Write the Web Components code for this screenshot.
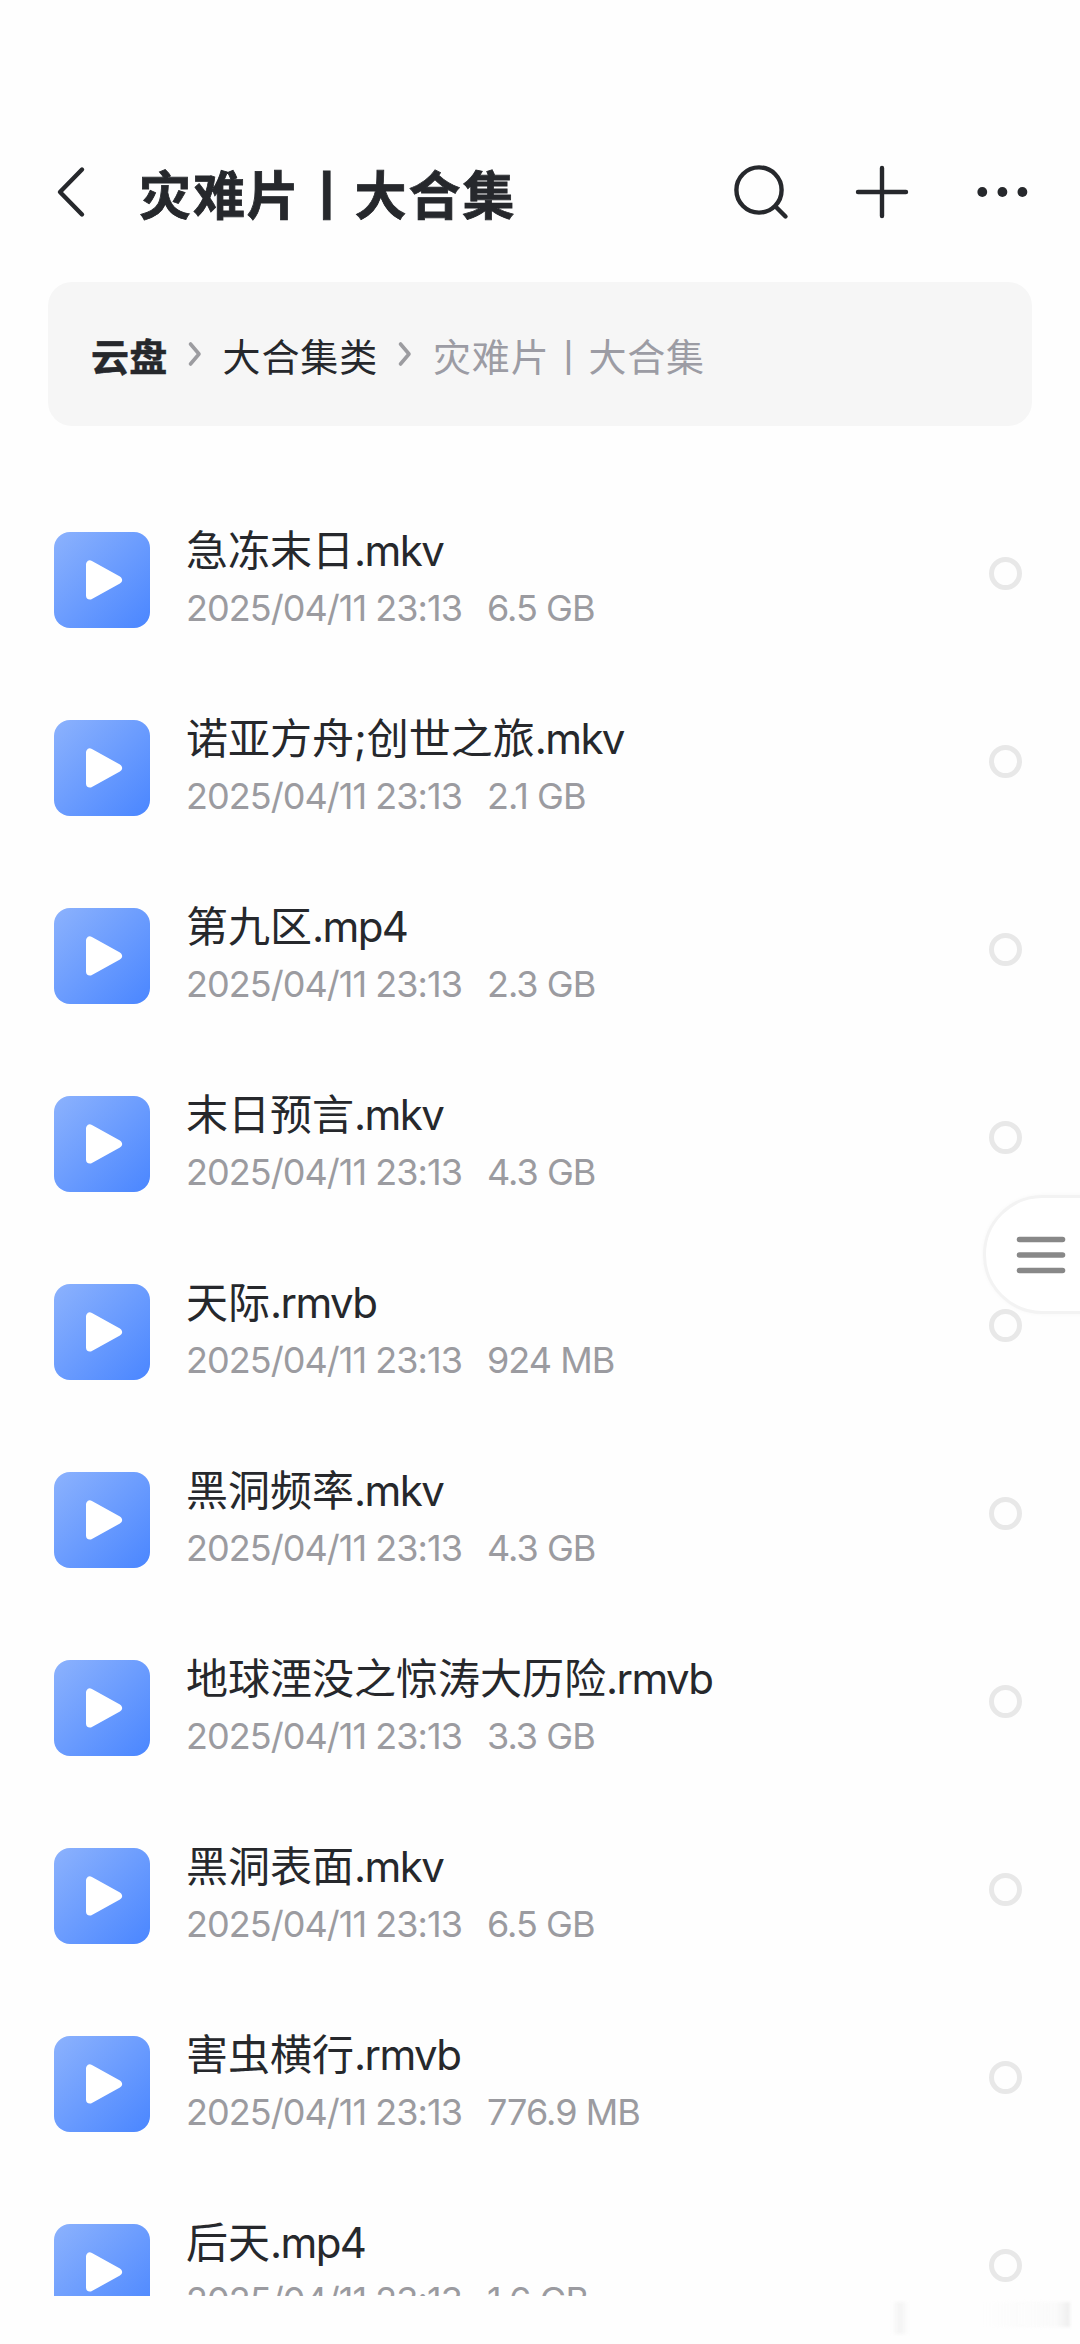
<!DOCTYPE html>
<html lang="zh-CN">
<head>
<meta charset="utf-8">
<meta name="viewport" content="width=device-width, initial-scale=1">
<title>灾难片丨大合集</title>
<style>
  html, body { margin: 0; background: #fefefe; }
  body {
    font-family: Inter, "Noto Sans CJK SC", sans-serif;
    color: #26282c;
    overflow: hidden;
  }
</style>
</head>
<body>
<drive-page>
  <drive-header slot="header">灾难片丨大合集</drive-header>
  <bread-crumbs slot="crumbs">
    <bread-crumb root>云盘</bread-crumb>
    <bread-crumb>大合集类</bread-crumb>
    <bread-crumb current>灾难片丨大合集</bread-crumb>
  </bread-crumbs>
  <file-row name="急冻末日.mkv" size="6.5 GB"></file-row>
  <file-row name="诺亚方舟;创世之旅.mkv" size="2.1 GB"></file-row>
  <file-row name="第九区.mp4" size="2.3 GB"></file-row>
  <file-row name="末日预言.mkv" size="4.3 GB"></file-row>
  <file-row name="天际.rmvb" size="924 MB"></file-row>
  <file-row name="黑洞频率.mkv" size="4.3 GB"></file-row>
  <file-row name="地球湮没之惊涛大历险.rmvb" size="3.3 GB"></file-row>
  <file-row name="黑洞表面.mkv" size="6.5 GB"></file-row>
  <file-row name="害虫横行.rmvb" size="776.9 MB"></file-row>
  <file-row name="后天.mp4" size="1.6 GB"></file-row>
  <side-handle slot="overlay"></side-handle>
  <corner-smudge slot="overlay"></corner-smudge>
</drive-page>

<script>
class DrivePage extends HTMLElement {
  constructor() {
    super();
    this.attachShadow({ mode: 'open' }).innerHTML = `
      <style>
        :host {
          display: flex;
          flex-direction: column;
          position: relative;
          box-sizing: border-box;
          width: 1080px;
          height: 2344px;
          padding: 132px 0 48px;
          overflow: hidden;
        }
        .list {
          flex: 1;
          min-height: 0;
          margin-top: 60px;
          overflow: hidden;
        }
      </style>
      <slot name="header"></slot>
      <slot name="crumbs"></slot>
      <div class="list"><slot></slot></div>
      <slot name="overlay"></slot>
    `;
  }
}

class DriveHeader extends HTMLElement {
  constructor() {
    super();
    this.attachShadow({ mode: 'open' }).innerHTML = `
      <style>
        :host {
          display: flex;
          align-items: center;
          height: 120px;
          padding: 0 46px 0 42px;
        }
        svg {
          display: block;
          flex: none;
          width: 60px;
          height: 60px;
          fill: none;
          stroke: #26282c;
          stroke-width: 4.4;
          stroke-linecap: round;
          stroke-linejoin: round;
        }
        h1 {
          flex: 1;
          margin: 10px 0 0 37px;
          font-size: 52px;
          line-height: 72px;
          font-weight: 700;
          letter-spacing: 1.9px;
          -webkit-text-stroke: 0.8px currentColor;
          white-space: nowrap;
        }
        .actions { display: flex; gap: 60px; margin-right: 2px; }
        .dots { fill: #26282c; stroke: none; }
      </style>
      <svg viewBox="0 0 60 60"><path d="M40 7.5 18 30l22 22.5"/></svg>
      <h1><slot></slot></h1>
      <div class="actions">
        <svg viewBox="0 0 60 60"><circle cx="27" cy="28" r="22.6"/><path d="m43.500 44.500 10 10"/></svg>
        <svg viewBox="0 0 60 60"><path d="M30 6v48M6 30h48"/></svg>
        <svg class="dots" viewBox="0 0 60 60"><circle cx="10.300" cy="30" r="4.900"/><circle cx="30.400" cy="30" r="4.900"/><circle cx="50.400" cy="30" r="4.900"/></svg>
      </div>
    `;
  }
}

class BreadCrumbs extends HTMLElement {
  constructor() {
    super();
    this.attachShadow({ mode: 'open' }).innerHTML = `
      <style>
        :host {
          display: flex;
          align-items: center;
          box-sizing: border-box;
          height: 144px;
          margin: 30px 48px 0;
          padding: 6px 43px 0;
          border-radius: 24px;
          background: #f6f6f6;
        }
      </style>
      <slot></slot>
    `;
  }
}

class BreadCrumb extends HTMLElement {
  constructor() {
    super();
    this.attachShadow({ mode: 'open' }).innerHTML = `
      <style>
        :host {
          display: flex;
          align-items: center;
          font-size: 38px;
          line-height: 54px;
          letter-spacing: 0.85px;
          white-space: nowrap;
        }
        :host([root]) {
          font-weight: 700;
          letter-spacing: 0.3px;
          -webkit-text-stroke: 0.5px currentColor;
        }
        :host([current]) { color: #9c9ca4; }
        :host([current]) svg { display: none; }
        svg {
          width: 16px;
          height: 28px;
          margin: -6px 20px 0 19px;
          fill: none;
          stroke: #9c9ca0;
          stroke-width: 3.6;
          stroke-linecap: round;
          stroke-linejoin: round;
        }
      </style>
      <slot></slot>
      <svg viewBox="0 0 16 28"><path d="m3.500 4 8.500 10-8.500 10"/></svg>
    `;
  }
}

class FileRow extends HTMLElement {
  connectedCallback() {
    const name = this.getAttribute('name');
    const size = this.getAttribute('size');
    const date = this.getAttribute('date') || '2025/04/11 23:13';
    const dot = name.lastIndexOf('.');

    this.attachShadow({ mode: 'open' }).innerHTML = `
      <style>
        :host {
          display: flex;
          align-items: center;
          box-sizing: border-box;
          height: 188px;
          padding: 0 58px 0 54px;
        }
        .thumb { flex: none; width: 96px; height: 96px; display: block; }
        .text { flex: 1; margin: -7px 0 0 36px; }
        .name {
          font-size: 42px;
          line-height: 58px;
          font-weight: 400;
          white-space: nowrap;
        }
        .ext { letter-spacing: -1.6px; }
        .meta {
          display: flex;
          gap: 25px;
          font-size: 36px;
          line-height: 48px;
          margin-top: 4px;
          font-weight: 400;
          letter-spacing: -0.96px;
          color: #9b9ba0;
          white-space: nowrap;
        }
        .radio {
          flex: none;
          box-sizing: border-box;
          width: 33px;
          height: 33px;
          margin-top: -13px;
          border: 5px solid #e8e8e8;
          border-radius: 50%;
        }
      </style>
      <svg class="thumb" viewBox="0 0 96 96">
        <defs>
          <linearGradient id="fill" x1="0" y1="0" x2="1" y2="1">
            <stop offset="0" stop-color="#8cb2fd"/>
            <stop offset="1" stop-color="#4a86ff"/>
          </linearGradient>
        </defs>
        <rect width="96" height="96" rx="16" fill="url(#fill)"/>
        <path d="M36 32.500v31L64 48z" fill="#fff" stroke="#fff" stroke-width="8" stroke-linejoin="round"/>
      </svg>
      <div class="text">
        <div class="name">${name.slice(0, dot)}<span class="ext">${name.slice(dot)}</span></div>
        <div class="meta"><span>${date}</span><span>${size}</span></div>
      </div>
      <span class="radio"></span>
    `;
  }
}

// Half pill that sticks out of the right edge, over the list
class SideHandle extends HTMLElement {
  constructor() {
    super();
    this.attachShadow({ mode: 'open' }).innerHTML = `
      <style>
        :host {
          position: absolute;
          right: -4px;
          top: 1195px;
          display: flex;
          align-items: center;
          box-sizing: border-box;
          width: 101px;
          height: 119px;
          padding-left: 30px;
          border: 3px solid #f3f3f3;
          border-radius: 60px 0 0 60px;
          background: #fff;
          box-shadow: 0 0 4px rgba(0, 0, 0, 0.03);
        }
        svg { display: block; width: 50px; height: 38px; }
      </style>
      <svg viewBox="0 0 50 38" stroke="#888" stroke-width="5.600" stroke-linecap="round">
        <path d="M3.500 3.500h43M3.500 19h43M3.500 34.500h43"/>
      </svg>
    `;
  }
}

class CornerSmudge extends HTMLElement {
  constructor() {
    super();
    this.attachShadow({ mode: 'open' }).innerHTML = `
      <style>
        :host {
          position: absolute;
          right: 10px;
          bottom: 10px;
          display: flex;
          justify-content: space-between;
          width: 178px;
          height: 32px;
          filter: blur(1.5px);
        }
        i { display: block; }
        .a { width: 16px; background: linear-gradient(90deg, transparent, #f2f2f2 50%, transparent); }
        .b { width: 90px; height: 25px; background: linear-gradient(90deg, transparent, #fafafa 85%, #eee); }
      </style>
      <i class="a"></i><i class="b"></i>
    `;
  }
}

customElements.define('drive-page', DrivePage);
customElements.define('drive-header', DriveHeader);
customElements.define('bread-crumbs', BreadCrumbs);
customElements.define('bread-crumb', BreadCrumb);
customElements.define('file-row', FileRow);
customElements.define('side-handle', SideHandle);
customElements.define('corner-smudge', CornerSmudge);
</script>
</body>
</html>
